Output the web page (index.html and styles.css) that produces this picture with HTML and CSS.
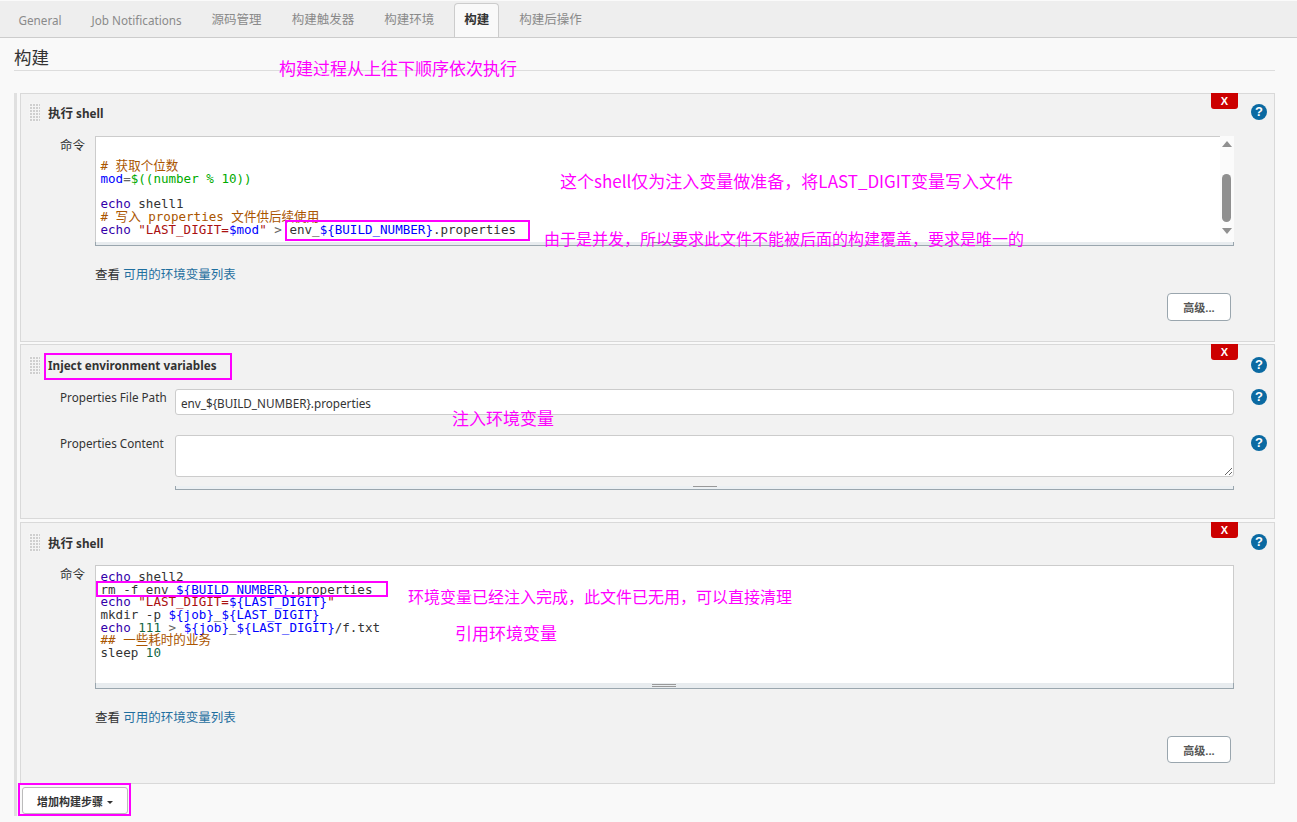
FILE: index.html
```html
<!DOCTYPE html>
<html lang="zh-CN">
<head>
    <meta charset="UTF-8">
    <meta name="viewport" content="width=device-width, initial-scale=1.0">
    <title>构建</title>
    <link rel="stylesheet" href="styles.css">
</head>
<body>

<div class="tabs">
    <div class="tab">General</div>
    <div class="tab">Job Notifications</div>
    <div class="tab zh">源码管理</div>
    <div class="tab zh">构建触发器</div>
    <div class="tab zh">构建环境</div>
    <div class="tab zh active">构建</div>
    <div class="tab zh">构建后操作</div>
</div>

<div class="section">
    <h2 class="section-title">构建</h2>

    <div class="steps">
        <!-- 第一个 shell -->
        <div class="step step-first">
            <button class="remove">X</button>
            <div class="step-head">
                <span class="handle"></span>
                <span class="step-title"><span class="zh">执行</span> shell</span>
                <span class="help">?</span>
            </div>
            <div class="field-row">
                <div class="label label-short zh">命令</div>
                <div class="editor">
                    <div class="code code-scrolled"><span> </span>
<span> </span>
<span class="cm">#&nbsp;获取个位数</span>
<span class="def">mod</span><span class="op">=</span><span class="num">$((number % 10))</span>
<span> </span>
<span class="kw">echo</span> shell1
<span class="cm">#&nbsp;写入 properties 文件供后续使用</span>
<span class="kw">echo</span> <span class="str">"LAST_DIGIT=</span><span class="def">$mod</span><span class="str">"</span> <span class="op">&gt;</span> env_<span class="def">${BUILD_NUMBER}</span>.properties</div>
                    <div class="scrollbar">
                        <span class="arrow-up"></span>
                        <span class="thumb"></span>
                        <span class="arrow-down"></span>
                    </div>
                    <div class="grip"><span class="grip-lines"></span></div>
                </div>
            </div>
            <div class="env-link zh">查看 <a href="#">可用的环境变量列表</a></div>
            <div class="step-foot"><button class="advanced">高级...</button></div>
        </div>

        <!-- 注入环境变量 -->
        <div class="step step-inject">
            <button class="remove">X</button>
            <div class="step-head">
                <span class="handle"></span>
                <span class="step-title">Inject environment variables</span>
                <span class="help">?</span>
            </div>
            <div class="field-row">
                <div class="label label-long">Properties File Path</div>
                <input class="text-input" type="text" value="env_${BUILD_NUMBER}.properties">
                <span class="help">?</span>
            </div>
            <div class="field-row field-row-content">
                <div class="label label-long">Properties Content</div>
                <div class="content-box">
                    <textarea class="text-area"></textarea>
                    <div class="grip grip-flat"><span class="grip-lines grip-lines-center"></span></div>
                </div>
                <span class="help">?</span>
            </div>
        </div>

        <!-- 第二个 shell -->
        <div class="step step-last">
            <button class="remove">X</button>
            <div class="step-head">
                <span class="handle"></span>
                <span class="step-title"><span class="zh">执行</span> shell</span>
                <span class="help">?</span>
            </div>
            <div class="field-row">
                <div class="label label-short zh">命令</div>
                <div class="editor editor-tall">
                    <div class="code"><span class="kw">echo</span> shell2
rm -f env_<span class="def">${BUILD_NUMBER}</span>.properties
<span class="kw">echo</span> <span class="str">"LAST_DIGIT=</span><span class="def">${LAST_DIGIT}</span><span class="str">"</span>
mkdir -p <span class="def">${job}</span>_<span class="def">${LAST_DIGIT}</span>
<span class="kw">echo</span> <span class="val">111</span> <span class="op">&gt;</span> <span class="def">${job}</span>_<span class="def">${LAST_DIGIT}</span>/f.txt
<span class="cm">##&nbsp;一些耗时的业务</span>
sleep <span class="val">10</span></div>
                    <div class="grip grip-tall"><span class="grip-lines grip-lines-double"></span></div>
                </div>
            </div>
            <div class="env-link zh">查看 <a href="#">可用的环境变量列表</a></div>
            <div class="step-foot"><button class="advanced">高级...</button></div>
        </div>

        <button class="add-step">增加构建步骤<span class="caret"></span></button>
    </div>
</div>

<!-- 截图上的标注 -->
<div class="box box-file"></div>
<div class="box box-inject"></div>
<div class="box box-rm"></div>
<div class="box box-add"></div>

<div class="note note-order">构建过程从上往下顺序依次执行</div>
<div class="note note-shell">这个shell仅为注入变量做准备，将LAST_DIGIT变量写入文件</div>
<div class="note note-unique">由于是并发，所以要求此文件不能被后面的构建覆盖，要求是唯一的</div>
<div class="note note-inject">注入环境变量</div>
<div class="note note-clean">环境变量已经注入完成，此文件已无用，可以直接清理</div>
<div class="note note-use">引用环境变量</div>

</body>
</html>
```

FILE: styles.css
```css
* {
    box-sizing: border-box;
}
html, body {
    height: 822px;
    overflow: hidden;
}
body {
    margin: 0;
    background-color: #f9f9f9;
    color: #333;
    font-family: "Noto Sans", "Noto Sans CJK SC", sans-serif;
    font-size: 11.7px;
}
.zh {
    font-size: 12.5px;
}

/* tabs */
.tabs {
    display: flex;
    height: 38px;
    padding: 2px 0 0 3.5px;
    background-color: #eee;
    border-top: 1px solid #fafafa;
    border-bottom: 1px solid #ccc;
}
.tab {
    margin: 0 5px;
    padding: 0 9px;
    line-height: 32px;
    color: #8a8a8a;
    border: 1px solid transparent;
    border-bottom: none;
}
.tab.active {
    height: 34px;
    color: #333;
    font-weight: bold;
    background-color: #f9f9f9;
    border-color: #ccc;
    border-radius: 4px 4px 0 0;
}

/* section */
.section {
    padding: 0 22px 0 14px;
}
.section-title {
    height: 33px;
    margin: 0 0 22px;
    padding-top: 6px;
    font-size: 17.5px;
    font-weight: normal;
    line-height: 26px;
    color: #333;
    border-bottom: 1px solid #ddd;
}
.steps {
    padding: 0 0 2px 3px;
    border-left: 3px solid #e0e0e0;
}
.step {
    position: relative;
    margin-bottom: 2px;
    background-color: #f2f2f2;
    border: 1px solid #d9d9d9;
}
.step-first {
    height: 249px;
}
.step-inject {
    height: 175px;
    margin-bottom: 3px;
}
.step-last {
    height: 262px;
    margin-bottom: 0;
}
.step-head {
    display: flex;
    align-items: center;
    height: 36px;
    padding: 0 7px 0 8px;
}
.step-inject .step-head {
    height: 40px;
}
.step-last .step-head {
    height: 38px;
}
.handle {
    flex: none;
    width: 11px;
    height: 19px;
    margin-right: 8px;
    background-image: linear-gradient(90deg, #f4f4f4 1px, transparent 1px), linear-gradient(#f4f4f4 1px, #cfcfcf 1px);
    background-size: 3px 3px;
}
.step-title {
    flex: 1;
    font-weight: bold;
    color: #333;
}
.help {
    flex: none;
    width: 16px;
    height: 16px;
    font-family: "Liberation Sans", sans-serif;
    font-size: 13px;
    font-weight: bold;
    line-height: 16px;
    text-align: center;
    color: #fff;
    background-color: #0b6aa2;
    border-radius: 50%;
}
.remove {
    position: absolute;
    top: -1px;
    right: 36px;
    width: 27px;
    height: 16px;
    padding: 0;
    font-family: "Liberation Sans", sans-serif;
    font-size: 11px;
    font-weight: bold;
    line-height: 16px;
    color: #fff;
    background-color: #c00;
    border: none;
    border-radius: 0 0 3px 3px;
}

/* fields */
.field-row {
    display: flex;
    align-items: flex-start;
    padding: 4px 7px 0 39px;
}
.step-first .field-row {
    padding-top: 6px;
}
.label {
    flex: none;
    line-height: 18px;
    color: #333;
}
.label-short {
    width: 35px;
    padding-top: 1px;
}
.label-long {
    width: 115px;
    margin-top: -1px;
}
.text-input {
    flex: none;
    width: 1059px;
    height: 26px;
    margin-right: 17px;
    padding: 2px 5px 0;
    font: inherit;
    color: #333;
    background-color: #fff;
    border: 1px solid #ccc;
    border-radius: 3px;
}
.field-row-content {
    padding-top: 20px;
}
.content-box {
    flex: none;
    width: 1059px;
    margin-right: 17px;
}
.text-area {
    display: block;
    width: 100%;
    height: 42px;
    margin: 0;
    background-color: #fff;
    border: 1px solid #ccc;
    border-radius: 3px;
}
.editor {
    position: relative;
    flex: none;
    width: 1139px;
    height: 110px;
    background-color: #fff;
    border: 1px solid #ccc;
    border-bottom: none;
    border-right: none;
}
.editor-tall {
    height: 124px;
    border-right: 1px solid #ccc;
}
.code {
    height: 106px;
    padding: 5px 0 0 4.5px;
    font-family: "DejaVu Sans Mono", "Noto Sans CJK SC", monospace;
    font-size: 12.56px;
    line-height: 12.67px;
    white-space: pre;
    color: #333;
    overflow: hidden;
}
.code-scrolled {
    padding-top: 0;
    position: relative;
    top: -2px;
    height: 108px;
}
.editor-tall .code {
    height: 118px;
}
.cm { color: #a50; }
.kw { color: #30a; }
.def { color: #00f; }
.str { color: #a11; }
.num { color: #0a0; }
.val { color: #164; }
.op { color: #666; }

.scrollbar {
    position: absolute;
    top: -1px;
    right: 0;
    width: 14px;
    height: 107px;
    background-color: #fbfbfb;
}
.thumb {
    position: absolute;
    top: 38px;
    left: 2px;
    width: 9px;
    height: 48px;
    background-color: #8f8f8f;
    border-radius: 5px;
}
.arrow-up,
.arrow-down {
    position: absolute;
    left: 2px;
    width: 0;
    height: 0;
    border-left: 5px solid transparent;
    border-right: 5px solid transparent;
}
.arrow-up {
    top: 5px;
    border-bottom: 6px solid #8f8f8f;
}
.arrow-down {
    top: 92px;
    border-top: 6px solid #8f8f8f;
}
.grip {
    position: absolute;
    left: -1px;
    right: 0;
    bottom: 0;
    height: 4px;
    background-color: #e8ecef;
    border-bottom: 1px solid #9aa6ae;
    border-left: 1px solid #9aa6ae;
    border-right: 1px solid #9aa6ae;
}
.editor-tall .grip {
    right: -1px;
}
.grip-tall {
    height: 6px;
}
.grip-flat {
    position: relative;
    left: 0;
    height: 4px;
    margin-top: 9px;
    background-color: #ecf0f3;
}
.grip-lines {
    position: absolute;
    top: 0;
    left: 556px;
    width: 24px;
    height: 1px;
    background-color: #999;
}
.grip-lines-center {
    left: 517px;
}
.grip-lines-double {
    top: 1px;
    height: 3px;
    background-color: transparent;
    border-top: 1px solid #999;
    border-bottom: 1px solid #999;
}

.env-link {
    margin: 20px 0 0 74px;
    line-height: 18px;
}
.env-link a {
    color: #1f6f9f;
    text-decoration: none;
}
.step-foot {
    display: flex;
    justify-content: flex-end;
    margin-top: 9px;
    padding-right: 43px;
}
.advanced {
    width: 64px;
    height: 28px;
    padding: 0;
    font-family: inherit;
    font-size: 11px;
    font-weight: bold;
    color: #555;
    background-color: #fff;
    border: 1px solid #9aa6ae;
    border-radius: 4px;
}
.step-last .advanced {
    height: 27px;
}
.add-step {
    display: block;
    width: 106px;
    height: 27px;
    margin: 3px 0 0 2px;
    padding: 0;
    font-family: inherit;
    font-size: 11px;
    font-weight: bold;
    color: #333;
    background-color: #fff;
    border: 1px solid #bbb;
    border-radius: 3px;
}
.caret {
    display: inline-block;
    margin-left: 4px;
    vertical-align: 2px;
    border-left: 3px solid transparent;
    border-right: 3px solid transparent;
    border-top: 3px solid #333;
}

/* annotations */
.box {
    position: absolute;
    border: 2px solid #f0f;
}
.box-file {
    left: 285px;
    top: 220px;
    width: 245px;
    height: 21px;
}
.box-inject {
    left: 44px;
    top: 353px;
    width: 188px;
    height: 27px;
}
.box-rm {
    left: 96px;
    top: 581px;
    width: 292px;
    height: 16px;
}
.box-add {
    left: 18px;
    top: 783px;
    width: 113px;
    height: 33px;
}
.note {
    position: absolute;
    font-family: "Noto Sans CJK SC", sans-serif;
    line-height: 24px;
    color: #f0f;
    white-space: nowrap;
}
.note-order {
    left: 279px;
    top: 56px;
    font-size: 17px;
}
.note-shell {
    left: 560px;
    top: 169px;
    font-size: 17px;
}
.note-unique {
    left: 544px;
    top: 226px;
    font-size: 16px;
}
.note-inject {
    left: 452px;
    top: 406px;
    font-size: 17px;
}
.note-clean {
    left: 408px;
    top: 584px;
    font-size: 16px;
}
.note-use {
    left: 455px;
    top: 621px;
    font-size: 17px;
}
```
